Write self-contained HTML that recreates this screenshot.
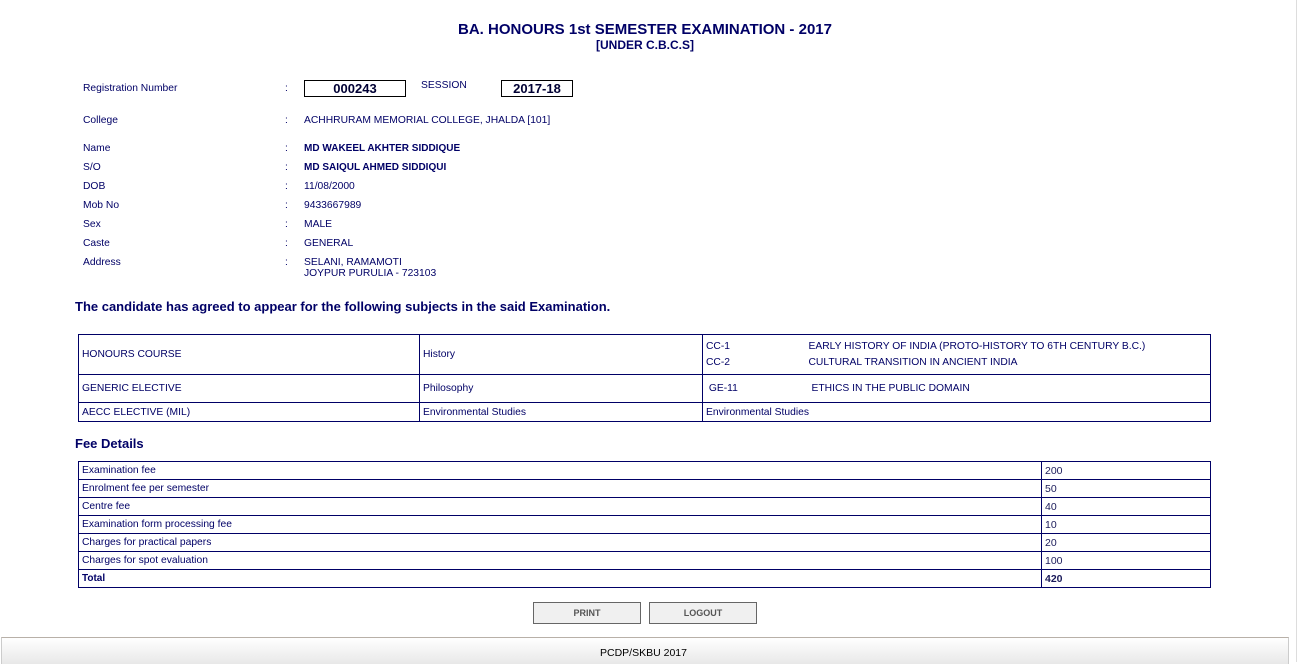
<!DOCTYPE html>
<html><head><meta charset="utf-8"><style>
body{margin:0;width:1300px;height:662px;background:#fff;font-family:"Liberation Sans",Arial,sans-serif;color:#000066;position:relative;overflow:hidden;font-size:10.3px}
.a{position:absolute;white-space:nowrap}
.t1{left:0;width:1290px;text-align:center;top:21px;font-weight:bold;font-size:15px}
.t2{left:0;width:1290px;text-align:center;top:38px;font-weight:bold;font-size:12px}
.box{position:absolute;border:1px solid #000;font-weight:bold;font-size:13px;text-align:center;line-height:15px;color:#000033}
table{position:absolute;border-collapse:collapse;left:78px;width:1133px}
td{border:1px solid #000066;padding:0 3px;font-size:10.3px;vertical-align:middle}
.fee td{height:17px;padding:0 3px}
.fee td:nth-child(2){font-size:10.5px;color:#1a1a5a}
.btn{position:absolute;top:602px;height:20px;width:106px;border:1px solid #666;background:#f0f0f0;font-size:9px;font-weight:bold;color:#555;text-align:center;line-height:20px}
.foot{position:absolute;left:1px;top:637px;width:1286px;height:26px;border-top:1px solid #b8b0a8;border-left:1px solid #ccc;border-right:1px solid #ccc;background:linear-gradient(#fff,#e8e8e8);color:#000;font-size:10.5px}
</style></head><body>
<div class="a t1">BA. HONOURS 1st SEMESTER EXAMINATION - 2017</div>
<div class="a t2">[UNDER C.B.C.S]</div>

<div class="a" style="left:83px;top:83px">Registration Number</div>
<div class="a" style="left:285px;top:83px">:</div>
<div class="box" style="left:304px;top:80px;width:100px">000243</div>
<div class="a" style="left:421px;top:80px">SESSION</div>
<div class="box" style="left:501px;top:80px;width:70px">2017-18</div>

<div class="a" style="left:83px;top:115px">College</div><div class="a" style="left:285px;top:115px">:</div><div class="a" style="left:304px;top:115px">ACHHRURAM MEMORIAL COLLEGE, JHALDA [101]</div>
<div class="a" style="left:83px;top:143px">Name</div><div class="a" style="left:285px;top:143px">:</div><div class="a" style="left:304px;top:143px;font-weight:bold;font-size:10px">MD WAKEEL AKHTER SIDDIQUE</div>
<div class="a" style="left:83px;top:162px">S/O</div><div class="a" style="left:285px;top:162px">:</div><div class="a" style="left:304px;top:162px;font-weight:bold;font-size:10px">MD SAIQUL AHMED SIDDIQUI</div>
<div class="a" style="left:83px;top:181px">DOB</div><div class="a" style="left:285px;top:181px">:</div><div class="a" style="left:304px;top:181px">11/08/2000</div>
<div class="a" style="left:83px;top:200px">Mob No</div><div class="a" style="left:285px;top:200px">:</div><div class="a" style="left:304px;top:200px">9433667989</div>
<div class="a" style="left:83px;top:219px">Sex</div><div class="a" style="left:285px;top:219px">:</div><div class="a" style="left:304px;top:219px">MALE</div>
<div class="a" style="left:83px;top:238px">Caste</div><div class="a" style="left:285px;top:238px">:</div><div class="a" style="left:304px;top:238px">GENERAL</div>
<div class="a" style="left:83px;top:257px">Address</div><div class="a" style="left:285px;top:257px">:</div><div class="a" style="left:304px;top:257px;line-height:11px">SELANI, RAMAMOTI<br>JOYPUR PURULIA - 723103</div>

<div class="a" style="left:75px;top:299px;font-weight:bold;font-size:13px">The candidate has agreed to appear for the following subjects in the said Examination.</div>

<table style="top:334px">
<tr style="height:40px"><td style="width:334px">HONOURS COURSE</td><td style="width:276px">History</td><td style="line-height:16px">CC-1<span style="position:absolute;left:730px">EARLY HISTORY OF INDIA (PROTO-HISTORY TO 6TH CENTURY B.C.)</span><br>CC-2<span style="position:absolute;left:730px">CULTURAL TRANSITION IN ANCIENT INDIA</span></td></tr>
<tr style="height:28px"><td>GENERIC ELECTIVE</td><td>Philosophy</td><td>&nbsp;GE-11<span style="position:absolute;left:733px">ETHICS IN THE PUBLIC DOMAIN</span></td></tr>
<tr style="height:19px"><td>AECC ELECTIVE (MIL)</td><td>Environmental Studies</td><td>Environmental Studies</td></tr>
</table>

<div class="a" style="left:75px;top:436px;font-weight:bold;font-size:13px">Fee Details</div>

<table class="fee" style="top:461px">
<tr><td style="width:956px">Examination fee</td><td>200</td></tr>
<tr><td>Enrolment fee per semester</td><td>50</td></tr>
<tr><td>Centre fee</td><td>40</td></tr>
<tr><td>Examination form processing fee</td><td>10</td></tr>
<tr><td>Charges for practical papers</td><td>20</td></tr>
<tr><td>Charges for spot evaluation</td><td>100</td></tr>
<tr><td style="font-weight:bold;font-size:10px">Total</td><td style="font-weight:bold">420</td></tr>
</table>

<div class="btn" style="left:533px">PRINT</div>
<div class="btn" style="left:649px">LOGOUT</div>
<div class="foot"><span class="a" style="left:598px;top:9px">PCDP/SKBU 2017</span></div>
<div class="a" style="left:1296px;top:0;width:1px;height:662px;background:#ddd"></div>
</body></html>
